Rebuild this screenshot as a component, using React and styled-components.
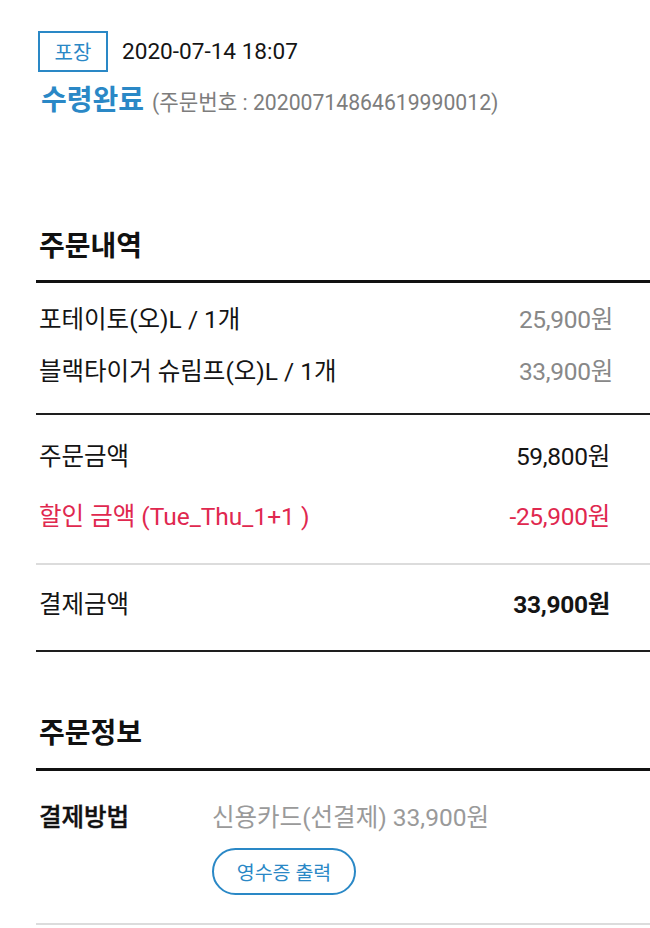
import React from "react";
import styled, { createGlobalStyle } from "styled-components";

const Global = createGlobalStyle`
  html, body { margin: 0; padding: 0; background: #ffffff; }
  body { font-family: Roboto, "Noto Sans CJK KR", sans-serif; color: #111; }
  * { box-sizing: border-box; }
`;

const BLUE = "#2a88c6";

const Page = styled.div`
  width: 650px;
  min-height: 928px;
  padding-top: 31px;
  overflow: hidden;
`;

const Header = styled.div`
  padding-left: 38px;
`;

const TopRow = styled.div`
  display: flex;
  align-items: center;
  gap: 14px;
`;

const Badge = styled.span`
  display: inline-flex;
  align-items: center;
  justify-content: center;
  width: 70px;
  height: 41px;
  border: 2px solid ${BLUE};
  color: ${BLUE};
  font-size: 20px;
`;

const DateText = styled.span`
  font-size: 22.6px;
  color: #151515;
`;

const TitleRow = styled.div`
  display: flex;
  align-items: baseline;
  margin-top: 12px;
  line-height: 33px;
  padding-left: 3px;
`;

const Status = styled.span`
  font-size: 28px;
  font-weight: 700;
  color: ${BLUE};
`;

const OrderNo = styled.span`
  margin-left: 8px;
  font-size: 21.2px;
  color: #7d7d7d;
`;

const Section = styled.section`
  margin-left: 36px;
  margin-top: ${(p) => p.$top}px;
`;

const SectionTitle = styled.h2`
  margin: 0;
  padding: 0 0 ${(p) => p.$pb}px 3px;
  font-size: 28px;
  line-height: 34px;
  font-weight: 700;
  border-bottom: 3px solid #111;
`;

const Group = styled.div`
  padding: ${(p) => p.$pt}px 0 ${(p) => p.$pb}px 0;
  border-bottom: 2px solid ${(p) => (p.$light ? "#dcdcdc" : "#1e1e1e")};
`;

const Row = styled.div`
  display: flex;
  align-items: center;
  justify-content: space-between;
  height: ${(p) => p.$h}px;
  padding: 0 ${(p) => p.$pr}px 0 3px;
  font-size: 24.5px;
  color: ${(p) => p.$color || "#141414"};
`;

const Price = styled.span`
  color: ${(p) => p.$color || "inherit"};
  font-weight: ${(p) => (p.$bold ? 700 : 400)};
  letter-spacing: -0.3px;
`;

const InfoRow = styled.div`
  display: grid;
  grid-template-columns: 173px 1fr;
  padding-left: 3px;
  font-size: 24.5px;
  line-height: 34px;
`;

const InfoLabel = styled.span`
  font-weight: 500;
  -webkit-text-stroke: 0.4px #111;
  color: #111;
`;

const InfoValue = styled.div`
  display: flex;
  flex-direction: column;
  align-items: flex-start;
  color: #9a9a9a;
`;

const Pill = styled.button`
  margin-top: 13px;
  width: 144px;
  height: 47px;
  border: 2px solid ${BLUE};
  border-radius: 24px;
  background: #fff;
  color: ${BLUE};
  font-family: inherit;
  font-size: 19.5px;
  padding: 0;
`;

export default function App() {
  return (
    <Page>
      <Global />
      <Header>
        <TopRow>
          <Badge>포장</Badge>
          <DateText>2020-07-14 18:07</DateText>
        </TopRow>
        <TitleRow>
          <Status>수령완료</Status>
          <OrderNo>(주문번호 : 20200714864619990012)</OrderNo>
        </TitleRow>
      </Header>

      <Section $top={111}>
        <SectionTitle $pb={16}>주문내역</SectionTitle>
        <Group $pt={8} $pb={18}>
          <Row $h={52} $pr={37}>
            <span>포테이토(오)L / 1개</span>
            <Price $color="#888">25,900원</Price>
          </Row>
          <Row $h={52} $pr={37}>
            <span>블랙타이거 슈림프(오)L / 1개</span>
            <Price $color="#888">33,900원</Price>
          </Row>
        </Group>
        <Group $pt={9} $pb={19} $light>
          <Row $h={60} $pr={40}>
            <span>주문금액</span>
            <Price>59,800원</Price>
          </Row>
          <Row $h={60} $pr={40} $color="#e0284f">
            <span>할인 금액 (Tue_Thu_1+1 )</span>
            <Price>-25,900원</Price>
          </Row>
        </Group>
        <Group $pt={7} $pb={18}>
          <Row $h={60} $pr={40}>
            <span>결제금액</span>
            <Price $bold>33,900원</Price>
          </Row>
        </Group>
      </Section>

      <Section $top={65}>
        <SectionTitle $pb={17}>주문정보</SectionTitle>
        <Group $pt={30} $pb={28} $light>
          <InfoRow>
            <InfoLabel>결제방법</InfoLabel>
            <InfoValue>
              <span>신용카드(선결제) 33,900원</span>
              <Pill>영수증 출력</Pill>
            </InfoValue>
          </InfoRow>
        </Group>
      </Section>
    </Page>
  );
}
